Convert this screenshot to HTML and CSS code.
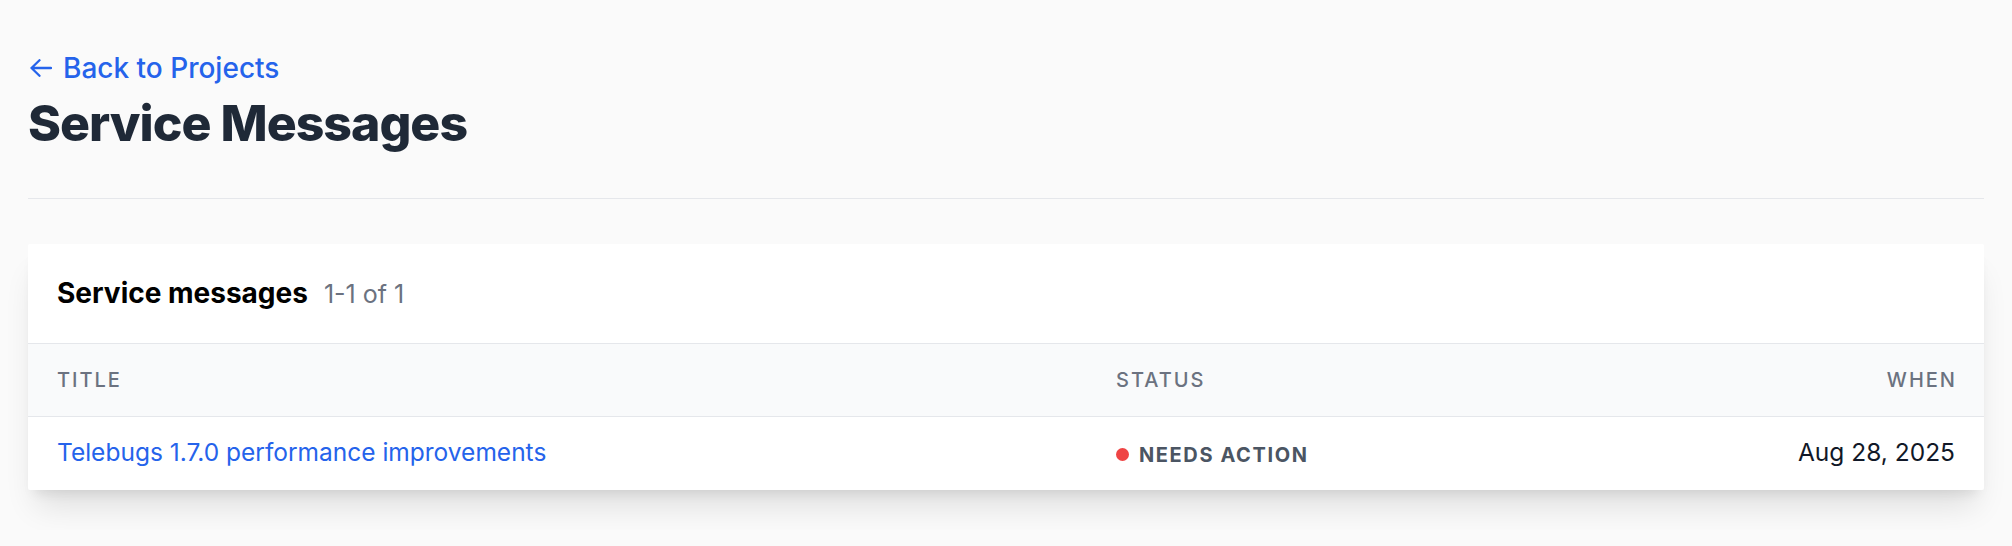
FILE: index.html
```html
<!DOCTYPE html>
<html lang="en">
<head>
<meta charset="utf-8">
<title>Service Messages</title>
<link rel="stylesheet" href="styles.css">
</head>
<body>
<main class="page">
  <header class="page-header">
    <a class="back-link" href="#">
      <svg class="back-icon" viewBox="0 0 22 18" width="22" height="18" aria-hidden="true">
        <path d="M21 9H1.5M9.5 1.2L1.5 9l8 7.8" fill="none" stroke="currentColor" stroke-width="2.3" stroke-linecap="round" stroke-linejoin="round"/>
      </svg>
      <span>Back to Projects</span>
    </a>
    <h1 class="page-title">Service Messages</h1>
  </header>

  <section class="card">
    <div class="card-header">
      <h2 class="card-title">Service messages</h2>
      <span class="card-count">1-1 of 1</span>
    </div>
    <div class="table">
      <div class="row head">
        <div class="cell">Title</div>
        <div class="cell">Status</div>
        <div class="cell right">When</div>
      </div>
      <div class="row body">
        <div class="cell"><a class="msg-link" href="#">Telebugs 1.7.0 performance improvements</a></div>
        <div class="cell"><span class="status"><span class="dot"></span>Needs action</span></div>
        <div class="cell right date">Aug 28, 2025</div>
      </div>
    </div>
  </section>
</main>
</body>
</html>
```

FILE: styles.css
```css
* { box-sizing: border-box; }
html, body {
  margin: 0;
  background: #fafafa;
  font-family: Inter, "Noto Sans", sans-serif;
  color: #111827;
}
.page {
  padding: 52px 28px 40px;
}
.page-header {
  padding-bottom: 45px;
  border-bottom: 1px solid #e5e7eb;
}
.back-link {
  display: inline-flex;
  align-items: center;
  gap: 11px;
  color: #2563eb;
  text-decoration: none;
  font-size: 28px;
  line-height: 32px;
  font-weight: 500;
  padding-left: 2px;
}
.back-icon { display: block; }
.page-title {
  margin: 9px 0 0;
  font-size: 50px;
  line-height: 60px;
  font-weight: 800;
  letter-spacing: -1px;
  color: #1f2937;
}
.card {
  margin-top: 45px;
  background: #fff;
  border-radius: 2px;
  box-shadow: 0 24px 30px -8px rgba(0,0,0,0.11), 0 9px 12px -7px rgba(0,0,0,0.1);
  overflow: hidden;
}
.card-header {
  display: flex;
  align-items: baseline;
  gap: 16px;
  padding: 30px 29px;
  border-bottom: 1px solid #e5e7eb;
}
.card-title {
  margin: 0;
  font-size: 28px;
  line-height: 39px;
  font-weight: 700;
  color: #000;
}
.card-count {
  font-size: 25px;
  color: #6b7280;
}
.row {
  display: grid;
  grid-template-columns: 1059px 1fr auto;
}
.cell { padding: 0 29px; }
.right { text-align: right; }
.row.head {
  background: #f9fafb;
  border-bottom: 1px solid #e5e7eb;
  padding: 22px 0;
  font-size: 20px;
  line-height: 28px;
  letter-spacing: 0.1em;
  text-transform: uppercase;
  color: #6b7280;
  font-weight: 500;
}
.row.head .right { margin-right: -2px; }
.row.body {
  padding: 19px 0;
  font-size: 24.5px;
  line-height: 32px;
}
.msg-link {
  color: #2563eb;
  text-decoration: none;
}
.status {
  display: inline-flex;
  align-items: center;
  gap: 10px;
  font-size: 20px;
  font-weight: 700;
  letter-spacing: 0.08em;
  text-transform: uppercase;
  color: #4b5563;
}
.dot {
  width: 13px;
  height: 13px;
  border-radius: 50%;
  background: #ef4444;
}
.date { color: #111827; }
```
